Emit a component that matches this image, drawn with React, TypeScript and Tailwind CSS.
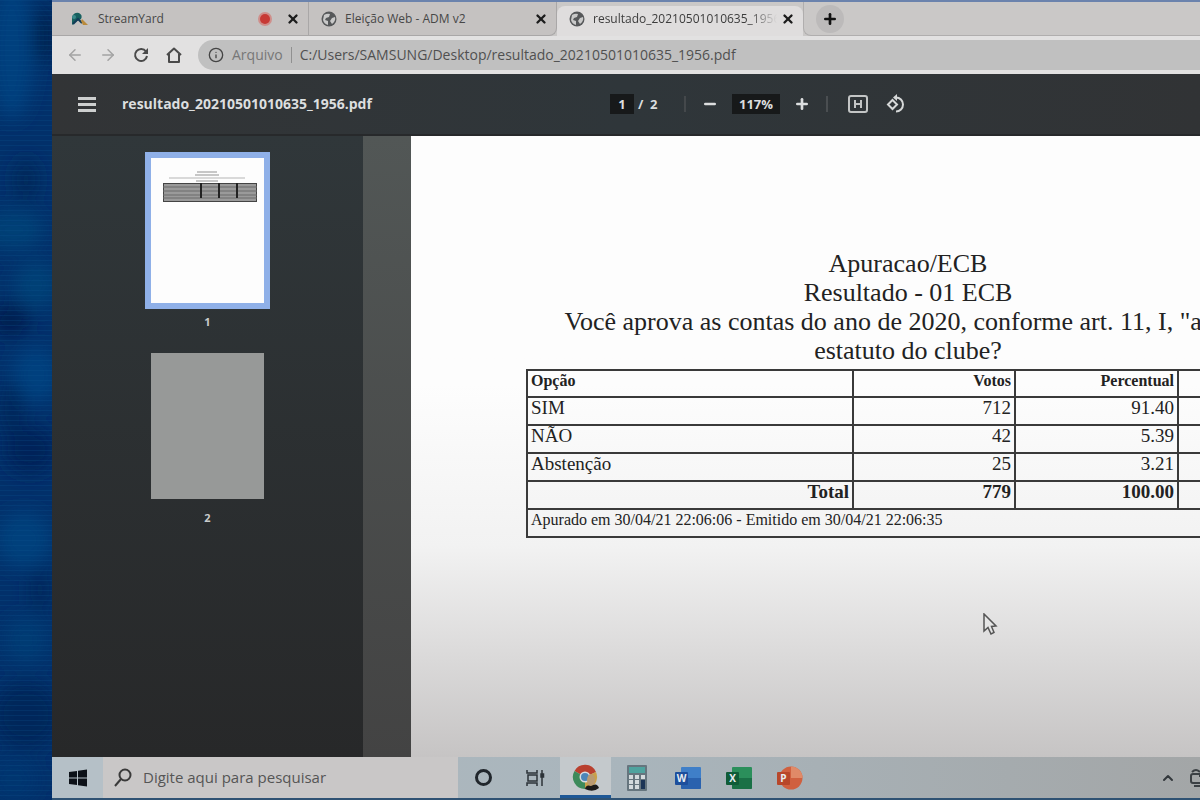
import React from 'react';
import { ArrowLeft, ArrowRight, ChevronUp, Info, Minus, Plus, X } from 'lucide-react';

const tabs = [
  { id: 'streamyard', title: 'StreamYard', recording: true },
  { id: 'eleicao', title: 'Eleição Web - ADM v2' },
  { id: 'resultado', title: 'resultado_20210501010635_1956.pdf', active: true },
];

const rows = [
  { option: 'SIM', votes: '712', percent: '91.40' },
  { option: 'NÃO', votes: '42', percent: '5.39' },
  { option: 'Abstenção', votes: '25', percent: '3.21' },
];

const StreamYardIcon: React.FC = () => (
  <svg viewBox="0 0 20 16" className="w-5 h-4 shrink-0">
    <path d="M2 14 L2 6 Q4 1 9 2 Q13 4 11 8 L7 10 Z" fill="#17605f" />
    <path d="M3 13 L8 8 L12 12" fill="none" stroke="#123c58" strokeWidth="2" />
    <path d="M12 8 L18 14 H13 L11 10 Z" fill="#b98a3c" />
    <circle cx="4" cy="6" r="2" fill="#3b8a8b" />
  </svg>
);

const GlobeIcon: React.FC = () => (
  <svg viewBox="0 0 16 16" className="w-4 h-4 shrink-0">
    <circle cx="8" cy="8" r="7.500" fill="#56585a" />
    <path d="M3 4 Q6 2 9 3 L8 6 L5 7 L4 9 L7 10 L7 14 Q3 13 2 9 Z" fill="#c9c9c9" />
    <path d="M11 7 L14 6 Q15 10 11 13 L9 10 Z" fill="#c9c9c9" />
  </svg>
);

const ReloadIcon: React.FC = () => (
  <svg viewBox="0 0 16 16" className="w-4 h-4" fill="none" stroke="#4a4a4a" strokeWidth="2">
    <path d="M13 4.5 A6 6 0 1 0 14 9" />
    <path d="M15 1 V7 H9 Z" fill="#4a4a4a" stroke="none" />
  </svg>
);

const HomeIcon: React.FC = () => (
  <svg viewBox="0 0 16 16" className="w-4 h-4" fill="none" stroke="#4a4a4a" strokeWidth="2">
    <path d="M1 8 L8 1.5 L15 8 M3 7 V15 H13 V7" strokeLinejoin="round" />
  </svg>
);

const FitIcon: React.FC = () => (
  <svg viewBox="0 0 20 18" className="w-5 h-[18px]" fill="none" stroke="#c3c5c5" strokeWidth="2">
    <rect x="1" y="1" width="18" height="16" rx="2" />
    <path d="M7 5 V13 M13 5 V13 M7 9 H13" />
  </svg>
);

const RotateIcon: React.FC = () => (
  <svg viewBox="0 0 20 20" className="w-5 h-5" fill="none" stroke="#d6d8d8" strokeWidth="2">
    <path d="M6.5 6 L11 10.5 L6.500 15 L2 10.500 Z" />
    <path d="M10 3.500 A7 7 0 1 1 10 17.500" />
    <path d="M11 0 V7 L7 3.500 Z" fill="#d6d8d8" stroke="none" />
  </svg>
);

const WindowsIcon: React.FC = () => (
  <svg viewBox="0 0 18 18" className="w-[18px] h-[18px]" fill="#0c1118">
    <path d="M0 3 L8 2 V8.500 H0 Z M9 1.800 L18 0.500 V8.500 H9 Z M0 9.500 H8 V16 L0 15 Z M9 9.500 H18 V17.500 L9 16.200 Z" />
  </svg>
);

const SearchIcon: React.FC = () => (
  <svg viewBox="0 0 20 20" className="w-5 h-5 shrink-0" fill="none" stroke="#3a3a3a" strokeWidth="2">
    <circle cx="12" cy="7" r="5.500" />
    <path d="M8 11 L2 18" />
  </svg>
);

const TaskViewIcon: React.FC = () => (
  <svg viewBox="0 0 20 18" className="w-5 h-[18px]" fill="none" stroke="#2c3338" strokeWidth="1.500">
    <path d="M2 1 V4 H12 V1 M2 17 V14 H12 V17" />
    <rect x="3" y="6" width="9" height="6" />
    <path d="M17 1 V17" />
    <rect x="16" y="5" width="2.500" height="3" fill="#2c3338" />
  </svg>
);

const ChromeIcon: React.FC = () => (
  <svg viewBox="0 0 28 28" className="w-7 h-7">
    <path d="M13 13 L2.500 7 A12 12 0 0 1 24 8 Z" fill="#b9402f" />
    <path d="M13 13 L24 8 A12 12 0 0 1 13 25 Z" fill="#c9a04a" />
    <path d="M13 13 L13 25 A12 12 0 0 1 2.500 7 Z" fill="#3d8a5a" />
    <circle cx="13" cy="13" r="5.500" fill="#d9dde0" />
    <circle cx="13" cy="13" r="4" fill="#4d86b8" />
    <ellipse cx="19" cy="16" rx="4" ry="6" fill="#b99a72" />
    <path d="M13 25 Q14 20 19 22 Q25 18 27 24 Q21 29 13 25 Z" fill="#1b1a1a" />
  </svg>
);

const CalculatorIcon: React.FC = () => (
  <svg viewBox="0 0 20 26" className="w-5 h-[26px]">
    <rect width="20" height="26" rx="1" fill="#66757e" />
    <rect x="2" y="2" width="16" height="6" fill="#4fa39f" />
    <g fill="#d3dadd">
      <rect x="2" y="10" width="4" height="4" />
      <rect x="8" y="10" width="4" height="4" />
      <rect x="14" y="10" width="4" height="4" />
      <rect x="2" y="15" width="4" height="4" />
      <rect x="8" y="15" width="4" height="4" />
      <rect x="2" y="20" width="4" height="4" />
      <rect x="8" y="20" width="4" height="4" />
    </g>
    <rect x="14" y="15" width="4" height="9" fill="#1d3556" />
  </svg>
);

const OfficeIcon: React.FC<{ letter: string; dark: string; light: string; round?: boolean }> = ({
  letter,
  dark,
  light,
  round,
}) => (
  <svg viewBox="0 0 26 24" className="w-[26px] h-6">
    {round ? (
      <>
        <circle cx="14" cy="12" r="11.500" fill={light} />
        <path d="M14 0.500 A11.500 11.500 0 0 1 25.500 12 H14 Z" fill="#e08a68" />
      </>
    ) : (
      <>
        <rect x="6" y="1" width="20" height="22" rx="1" fill={light} />
        <path d="M6 12 H26 V22 Q26 23 25 23 H7 Q6 23 6 22 Z" fill={dark} opacity="0.6" />
      </>
    )}
    <rect x="0" y="6" width="13" height="13" rx="1" fill={dark} />
    <text x="6.500" y="16" textAnchor="middle" fontSize="10" fontWeight="bold" fontFamily="Open Sans, sans-serif" fill="#e8eef2">
      {letter}
    </text>
  </svg>
);

const taskbarApps = [
  { name: 'Cortana', icon: <span className="block w-[17px] h-[17px] rounded-full border-3 border-[#20262c]" /> },
  { name: 'Visão de tarefas', icon: <TaskViewIcon /> },
  { name: 'Google Chrome', icon: <ChromeIcon />, active: true },
  { name: 'Calculadora', icon: <CalculatorIcon /> },
  { name: 'Word', icon: <OfficeIcon letter="W" dark="#1d4f9c" light="#3f7fc8" /> },
  { name: 'Excel', icon: <OfficeIcon letter="X" dark="#0f5c38" light="#2b8f5b" /> },
  { name: 'PowerPoint', icon: <OfficeIcon letter="P" dark="#b8472a" light="#d0603f" round /> },
];

/* Blue world map that shows on the left of the browser window */
const Backdrop: React.FC = () => (
  <div className="w-[52px] shrink-0 bg-[#033063] overflow-hidden">
    <svg viewBox="0 0 52 800" preserveAspectRatio="none" className="w-full h-full">
      <defs>
        <filter id="soft" x="-100%" y="-100%" width="300%" height="300%">
          <feGaussianBlur stdDeviation="9" />
        </filter>
        <pattern id="lines" width="4" height="5" patternUnits="userSpaceOnUse">
          <rect width="4" height="1" fill="#0d5390" opacity="0.25" />
        </pattern>
      </defs>
      <rect width="52" height="800" fill="#02306a" />
      <g filter="url(#soft)">
        <ellipse cx="12" cy="50" rx="22" ry="70" fill="#053f7e" />
        <ellipse cx="44" cy="35" rx="12" ry="28" fill="#022450" />
        <ellipse cx="26" cy="180" rx="10" ry="22" fill="#022556" />
        <ellipse cx="14" cy="230" rx="30" ry="20" fill="#063f76" />
        <ellipse cx="36" cy="285" rx="22" ry="24" fill="#063f76" />
        <ellipse cx="10" cy="320" rx="20" ry="16" fill="#011f50" />
        <ellipse cx="36" cy="375" rx="24" ry="28" fill="#05407e" />
        <ellipse cx="12" cy="410" rx="12" ry="28" fill="#02265a" />
        <ellipse cx="30" cy="450" rx="26" ry="24" fill="#012459" />
        <ellipse cx="24" cy="540" rx="28" ry="28" fill="#05407c" />
        <ellipse cx="40" cy="590" rx="10" ry="22" fill="#02265a" />
        <ellipse cx="26" cy="640" rx="22" ry="24" fill="#043a73" />
        <ellipse cx="26" cy="715" rx="34" ry="34" fill="#01265a" />
        <ellipse cx="14" cy="780" rx="24" ry="22" fill="#03366f" />
      </g>
      <rect width="52" height="800" fill="url(#lines)" />
    </svg>
  </div>
);

const TabStrip: React.FC = () => (
  <div className="flex h-[34px] bg-[#cac8c7]">
    {tabs.map((tab) => (
      <div
        key={tab.id}
        className={
          tab.active
            ? 'flex items-center w-[246px] shrink-0 mt-1 pb-1 pl-3 pr-2 rounded-t-lg bg-[#dfdddd]'
            : 'flex items-center w-[257px] shrink-0 pl-[18px] pr-2 border-r border-b border-[#a9a7a7] bg-[#c5c2c1] nth-2:w-[248px] nth-2:pl-3 nth-2:rounded-br-lg'
        }
      >
        {tab.recording ? <StreamYardIcon /> : <GlobeIcon />}
        <button
          className={
            tab.active
              ? 'flex-1 min-w-0 ml-2 text-left text-xs text-[#3c3c3c] whitespace-nowrap overflow-hidden [mask-image:linear-gradient(to_right,black_85%,transparent)]'
              : 'flex-1 min-w-0 ml-2 text-left text-xs text-[#474747] whitespace-nowrap overflow-hidden'
          }
        >
          {tab.title}
        </button>
        {tab.recording && (
          <span className="w-[10px] h-[10px] mr-3 rounded-full bg-[#c73a35] ring-2 ring-[#cf8e8a]" />
        )}
        <button aria-label="Fechar guia" className="ml-1">
          <X className="w-[14px] h-[14px] text-[#1c1c1c]" strokeWidth={4} />
        </button>
      </div>
    ))}
    <div className="flex-1 flex items-center pl-3 border-l border-b border-[#b0aeae] rounded-bl-lg">
      <button aria-label="Nova guia" className="flex items-center justify-center w-7 h-7 rounded-full bg-[#bcbaba]">
        <Plus className="w-4 h-4 text-[#111111]" strokeWidth={4} />
      </button>
    </div>
  </div>
);

const AddressBar: React.FC = () => (
  <div className="flex items-center h-[38px] pl-[14px] bg-[#e2e1e1]">
    <div className="flex items-center gap-[15px] pr-[15px]">
      <button aria-label="Voltar" className="w-[18px]">
        <ArrowLeft className="w-[18px] h-[18px] text-[#a3a3a3]" />
      </button>
      <button aria-label="Avançar" className="w-[18px]">
        <ArrowRight className="w-[18px] h-[18px] text-[#a3a3a3]" />
      </button>
      <button aria-label="Recarregar" className="w-[18px] flex justify-center">
        <ReloadIcon />
      </button>
      <button aria-label="Página inicial" className="w-[18px] flex justify-center">
        <HomeIcon />
      </button>
    </div>
    <div className="flex-1 flex items-center h-[30px] pl-[10px] rounded-l-full bg-[#c0c0c0]">
      <Info className="w-4 h-4 shrink-0 text-[#444444]" />
      <label htmlFor="url" className="ml-2 pr-2 border-r border-[#909090] text-sm leading-4 text-[#777777]">
        Arquivo
      </label>
      <input
        id="url"
        className="flex-1 min-w-0 ml-2 bg-transparent text-sm text-[#505050] outline-none"
        defaultValue="C:/Users/SAMSUNG/Desktop/resultado_20210501010635_1956.pdf"
      />
    </div>
  </div>
);

const PdfToolbar: React.FC = () => (
  <div className="flex items-center h-[62px] pl-[26px] bg-linear-to-r from-[#323436] via-[#2f363a] to-[#313335] text-[#dcdedf] text-[13px] font-bold border-b-2 border-[#27292b]">
    <button aria-label="Menu" className="flex flex-col gap-[3px] w-[18px] shrink-0">
      <span className="h-[3px] bg-[#cdcfcf]" />
      <span className="h-[3px] bg-[#cdcfcf]" />
      <span className="h-[3px] bg-[#cdcfcf]" />
    </button>
    <h1 className="w-[514px] shrink-0 pl-[26px] text-sm font-bold">resultado_20210501010635_1956.pdf</h1>
    <input
      aria-label="Página"
      className="w-6 h-5 bg-[#17191a] text-center outline-none"
      defaultValue="1"
    />
    <span className="w-[52px] shrink-0 pl-1 border-r-2 border-[#44484b] leading-4 whitespace-pre">/  2</span>
    <button aria-label="Reduzir" className="ml-4">
      <Minus className="w-4 h-4" strokeWidth={4} />
    </button>
    <input
      aria-label="Zoom"
      className="w-12 h-5 ml-[14px] bg-[#17191a] text-center text-[13px] outline-none"
      defaultValue="117%"
    />
    <button aria-label="Ampliar" className="ml-[14px] mr-4">
      <Plus className="w-4 h-4" strokeWidth={4} />
    </button>
    <span className="w-[2px] h-4 bg-[#4a4e51]" />
    <button aria-label="Ajustar à página" className="ml-5">
      <FitIcon />
    </button>
    <button aria-label="Girar" className="ml-[18px]">
      <RotateIcon />
    </button>
  </div>
);

const Thumbnails: React.FC = () => (
  <nav className="w-[311px] shrink-0 flex flex-col items-center pt-4 bg-linear-to-b from-[#30373a] to-[#272829] text-[11px] leading-4 font-bold text-[#c9cbcb]">
    <button aria-label="Página 1" className="w-[125px] h-[157px] border-6 border-[#8fb0e8] bg-[#fdfdfd]">
      <svg viewBox="0 0 113 145" className="w-full h-full">
        <path d="M46 14 H66 M44 17 H68 M45 23 H67" stroke="#b5b5b5" strokeWidth="1.500" />
        <path d="M18 20 H94" stroke="#b5b5b5" />
        <rect x="12.500" y="25.500" width="93" height="18" fill="#9a9a9a" stroke="#444444" />
        <path d="M12 29 H106 M12 33 H106 M12 37 H106 M12 40 H106" stroke="#6a6a6a" />
        <path d="M50 25 V40 M68 25 V40 M86 25 V40" stroke="#222222" strokeWidth="2" />
      </svg>
    </button>
    <span className="mt-[5px]">1</span>
    <button aria-label="Página 2" className="w-[113px] h-[146px] mt-[23px] bg-[#979998]" />
    <span className="mt-[11px]">2</span>
  </nav>
);

const Report: React.FC = () => (
  <article className="relative w-[994px] shrink-0 pt-[113px] px-[115px] bg-linear-to-b from-[#fdfdfd] from-40% via-[#f2f2f2] via-66% to-[#c6c4c4] to-100% font-['Liberation_Serif',serif] text-[#222222]">
    <h2 className="text-[26px] leading-[29px] text-center">
      Apuracao/ECB
      <br />
      Resultado - 01 ECB
      <br />
      Você aprova as contas do ano de 2020, conforme art. 11, I, "a", do
      <br />
      estatuto do clube?
    </h2>
    <table className="w-full mt-1 table-fixed border-collapse border-2 border-[#3a3a3a] text-[19px] leading-5 [&_td]:h-7 [&_td]:border-2 [&_td]:border-[#3a3a3a] [&_td]:px-[3px] [&_td]:align-top [&_th]:h-[27px] [&_th]:border-2 [&_th]:border-[#3a3a3a] [&_th]:px-[3px] [&_th]:align-top">
      <colgroup>
        <col className="w-[326px]" />
        <col className="w-[162px]" />
        <col className="w-[163px]" />
        <col />
      </colgroup>
      <thead>
        <tr className="text-base leading-5">
          <th className="text-left">Opção</th>
          <th className="text-right">Votos</th>
          <th className="text-right">Percentual</th>
          <th />
        </tr>
      </thead>
      <tbody>
        {rows.map((row) => (
          <tr key={row.option}>
            <td>{row.option}</td>
            <td className="text-right">{row.votes}</td>
            <td className="text-right">{row.percent}</td>
            <td />
          </tr>
        ))}
        <tr className="font-bold text-right">
          <td>Total</td>
          <td>779</td>
          <td>100.00</td>
          <td />
        </tr>
        <tr className="text-base leading-5">
          <td colSpan={4}>Apurado em 30/04/21 22:06:06 - Emitido em 30/04/21 22:06:35</td>
        </tr>
      </tbody>
    </table>

    {/* Mouse pointer */}
    <svg viewBox="0 0 16 22" className="absolute left-[571px] top-[477px] w-4 h-[22px]">
      <path d="M2 1 V18 L6 14.500 L9 21 L12 19.500 L9.500 13.500 L14 13 Z" fill="#e6e6e6" stroke="#555555" strokeWidth="1.500" />
    </svg>
  </article>
);

const Taskbar: React.FC = () => (
  <footer className="flex h-[43px] border-b-2 border-[#2f5273] bg-linear-to-r from-[#b0bac0] via-[#a9b5bc] to-[#a3a6a7]">
    <button aria-label="Iniciar" className="flex items-center justify-center w-[51px] bg-[#b5c0c7]">
      <WindowsIcon />
    </button>
    <label className="flex items-center w-[355px] pl-[10px] bg-[#c9c7c7]">
      <SearchIcon />
      <input
        aria-label="Pesquisar"
        className="flex-1 min-w-0 ml-[10px] bg-transparent text-[15px] placeholder:text-[#555555] outline-none"
        placeholder="Digite aqui para pesquisar"
      />
    </label>
    {taskbarApps.map((app) => (
      <button
        key={app.name}
        aria-label={app.name}
        className={
          app.active
            ? 'flex items-center justify-center w-[51px] pt-[3px] bg-[#c4c9cc] border-b-3 border-[#1f5896]'
            : 'flex items-center justify-center w-[51px]'
        }
      >
        {app.icon}
      </button>
    ))}
    <div className="flex items-center gap-3 ml-auto -mr-2">
      <button aria-label="Mostrar ícones ocultos">
        <ChevronUp className="w-4 h-4 text-[#33383c]" strokeWidth={3} />
      </button>
      <svg viewBox="0 0 20 20" className="w-5 h-5" fill="none" stroke="#3b4044" strokeWidth="2">
        <path d="M4 4 Q8 0 12 4" />
        <rect x="3" y="6" width="12" height="9" rx="2" />
        <path d="M11 8 H16 M6 18 H12" />
      </svg>
    </div>
  </footer>
);

export default function App() {
  return (
    <div className="flex h-screen overflow-hidden font-['Open_Sans',sans-serif]">
      <Backdrop />
      <div className="flex-1 min-w-0 flex flex-col overflow-hidden border-t-2 border-[#6b83ad]">
        <TabStrip />
        <AddressBar />
        <PdfToolbar />
        <main className="flex-1 min-h-0 flex overflow-hidden bg-linear-to-b from-[#525756] to-[#434343]">
          <Thumbnails />
          <div className="flex-1 min-w-0 flex pl-12 overflow-hidden">
            <Report />
          </div>
        </main>
        <Taskbar />
      </div>
    </div>
  );
}
